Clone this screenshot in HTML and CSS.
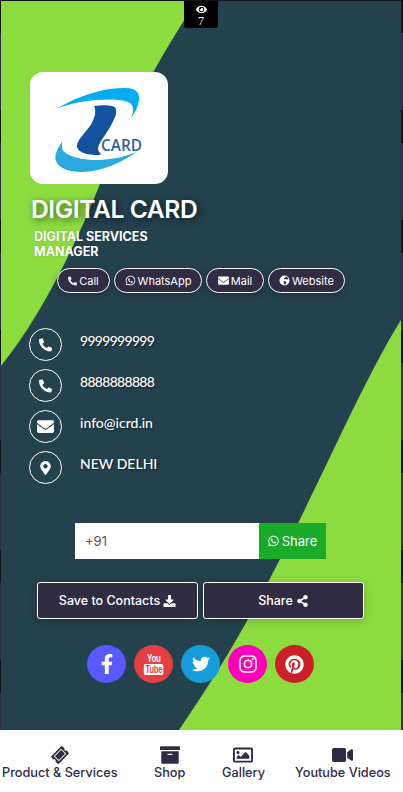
FILE: index.html
```html
<!DOCTYPE html>
<html lang="en">
<head>
<meta charset="utf-8">
<title>Digital Card</title>
<link rel="stylesheet" href="styles.css">
</head>
<body>
<main class="card">
  <svg class="backdrop" viewBox="0 0 400 729" preserveAspectRatio="none" aria-hidden="true">
    <path class="leaf" d="M0 0H196C170 38 130 105 99 183C72 250 40 315 0 365Z"/>
    <path class="leaf" d="M400 319V729H178C215 675 245 625 278 560C322 475 362 380 400 319Z"/>
  </svg>
  <div class="views">
    <svg class="views-eye" viewBox="0 0 576 512"><path d="M572.52 241.4C518.29 135.59 410.93 64 288 64S57.68 135.64 3.48 241.41a32.35 32.35 0 0 0 0 29.19C57.71 376.41 165.07 448 288 448s230.32-71.64 284.52-177.41a32.35 32.35 0 0 0 0-29.19zM288 400a144 144 0 1 1 144-144 143.93 143.93 0 0 1-144 144zm0-240a95.31 95.31 0 0 0-25.31 3.79 47.85 47.85 0 0 1-66.9 66.9A95.78 95.78 0 1 0 288 160z"/></svg>
    <span>7</span>
  </div>
  <div class="content">
    <div class="logo">
      <svg viewBox="0 0 138 112">
        <path class="logo-top" d="M26 37C48 24 74 15 96 16C106 16 110 21 109 28C108 35 105 41 101 46C104 40 104 34 100 31C94 27 80 27 66 28C52 29 38 32 26 37Z"/>
        <path class="logo-mid" d="M64 34C70 33 78 33 82 34C87 35 87 40 85 45C82 53 77 60 73 66C69 72 66 77 70 81C72 82 70 83 67 83C57 83 46 80 47 73C48 67 55 61 60 54C64 48 67 40 64 34Z"/>
        <path class="logo-low" d="M32 70C27 77 24 84 26 89C29 97 40 100 52 100C72 100 92 90 107 80C92 86 78 88 66 88C50 88 33 83 32 76Z"/>
        <text class="logo-text" x="71" y="79" textLength="41" lengthAdjust="spacingAndGlyphs">CARD</text>
      </svg>
    </div>
    <h1 class="name">DIGITAL CARD</h1>
    <p class="role">DIGITAL SERVICES<br>MANAGER</p>
    <div class="pills">
      <a class="pill"><svg class="ic" viewBox="0 0 512 512"><path d="M497.39 361.8l-112-48a24 24 0 0 0-28 6.9l-49.6 60.6A370.66 370.66 0 0 1 130.6 204.11l60.6-49.6a23.94 23.94 0 0 0 6.9-28l-48-112A24.16 24.16 0 0 0 122.6.61l-104 24A24 24 0 0 0 0 48c0 256.5 207.9 464 464 464a24 24 0 0 0 23.4-18.6l24-104a24.29 24.29 0 0 0-14.01-27.6z"/></svg>Call</a>
      <a class="pill"><svg class="ic ic-tall" viewBox="0 0 448 512"><path d="M380.9 97.1C339 55.1 283.2 32 223.9 32c-122.4 0-222 99.6-222 222 0 39.1 10.2 77.3 29.6 111L0 480l117.7-30.9c32.4 17.7 68.9 27 106.1 27h.1c122.3 0 224.1-99.6 224.1-222 0-59.3-25.2-115-67.1-157zm-157 341.6c-33.2 0-65.7-8.9-94-25.7l-6.7-4-69.8 18.3L72 359.2l-4.4-7c-18.5-29.4-28.2-63.3-28.2-98.2 0-101.7 82.8-184.5 184.6-184.5 49.3 0 95.6 19.2 130.4 54.1 34.8 34.9 56.2 81.2 56.1 130.5 0 101.8-84.9 184.6-186.6 184.6zm101.2-138.2c-5.5-2.8-32.8-16.2-37.9-18-5.1-1.9-8.8-2.8-12.5 2.8-3.7 5.6-14.3 18-17.6 21.8-3.2 3.7-6.5 4.2-12 1.4-32.6-16.3-54-29.1-75.5-66-5.7-9.8 5.7-9.1 16.3-30.3 1.8-3.7.9-6.9-.5-9.7-1.4-2.8-12.5-30.1-17.1-41.2-4.5-10.8-9.1-9.3-12.5-9.5-3.2-.2-6.9-.2-10.6-.2-3.7 0-9.7 1.4-14.8 6.9-5.1 5.6-19.4 19-19.4 46.3 0 27.3 19.9 53.7 22.6 57.4 2.8 3.7 39.1 59.7 94.8 83.8 35.2 15.2 49 16.5 66.6 13.9 10.7-1.6 32.8-13.4 37.4-26.4 4.6-13 4.6-24.1 3.2-26.4-1.3-2.5-5-3.9-10.5-6.6z"/></svg>WhatsApp</a>
      <a class="pill"><svg class="ic ic-wide" viewBox="0 0 512 512"><path d="M502.3 190.8c3.9-3.1 9.7-.2 9.7 4.7V400c0 26.5-21.5 48-48 48H48c-26.5 0-48-21.5-48-48V195.6c0-5 5.7-7.8 9.7-4.7 22.4 17.4 52.1 39.5 154.1 113.6 21.1 15.4 56.7 47.8 92.2 47.6 35.7.3 72-32.8 92.3-47.6 102-74.1 131.6-96.3 154-113.7zM256 320c23.2.4 56.6-29.2 73.4-41.4 132.7-96.3 142.8-104.7 173.4-128.7 5.8-4.5 9.2-11.5 9.2-18.9v-19c0-26.5-21.5-48-48-48H48C21.5 64 0 85.5 0 112v19c0 7.4 3.4 14.3 9.2 18.9 30.6 23.9 40.7 32.4 173.4 128.7 16.8 12.2 50.2 41.8 73.4 41.4z"/></svg>Mail</a>
      <a class="pill"><svg class="ic ic-tall" viewBox="0 0 24 24"><path fill-rule="evenodd" d="M12 1a11 11 0 1 0 0 22 11 11 0 0 0 0-22ZM14 3.500c3 .3 5.600 2.700 6.300 5.500l-3.300 1-2-1.500-3 1.500-1-3 3-1.500ZM11 13l4 1 1 2-2 4.500-2 .3-1-4-2-1.500Z"/></svg>Website</a>
    </div>
    <ul class="contacts">
      <li class="contact"><span class="disc"><svg viewBox="0 0 512 512"><path d="M497.39 361.8l-112-48a24 24 0 0 0-28 6.9l-49.6 60.6A370.66 370.66 0 0 1 130.6 204.11l60.6-49.6a23.94 23.94 0 0 0 6.9-28l-48-112A24.16 24.16 0 0 0 122.6.61l-104 24A24 24 0 0 0 0 48c0 256.5 207.9 464 464 464a24 24 0 0 0 23.4-18.6l24-104a24.29 24.29 0 0 0-14.01-27.6z"/></svg></span><span class="value value-num">9999999999</span></li>
      <li class="contact"><span class="disc"><svg viewBox="0 0 512 512"><path d="M497.39 361.8l-112-48a24 24 0 0 0-28 6.9l-49.6 60.6A370.66 370.66 0 0 1 130.6 204.11l60.6-49.6a23.94 23.94 0 0 0 6.9-28l-48-112A24.16 24.16 0 0 0 122.6.61l-104 24A24 24 0 0 0 0 48c0 256.5 207.9 464 464 464a24 24 0 0 0 23.4-18.6l24-104a24.29 24.29 0 0 0-14.01-27.6z"/></svg></span><span class="value value-num">8888888888</span></li>
      <li class="contact"><span class="disc"><svg class="disc-wide" viewBox="0 0 512 512"><path d="M502.3 190.8c3.9-3.1 9.7-.2 9.7 4.7V400c0 26.5-21.5 48-48 48H48c-26.5 0-48-21.5-48-48V195.6c0-5 5.7-7.8 9.7-4.7 22.4 17.4 52.1 39.5 154.1 113.6 21.1 15.4 56.7 47.8 92.2 47.6 35.7.3 72-32.8 92.3-47.6 102-74.1 131.6-96.3 154-113.7zM256 320c23.2.4 56.6-29.2 73.4-41.4 132.7-96.3 142.8-104.7 173.4-128.7 5.8-4.5 9.2-11.5 9.2-18.9v-19c0-26.5-21.5-48-48-48H48C21.5 64 0 85.5 0 112v19c0 7.4 3.4 14.3 9.2 18.9 30.6 23.9 40.7 32.4 173.4 128.7 16.8 12.2 50.2 41.8 73.4 41.4z"/></svg></span><span class="value">info@icrd.in</span></li>
      <li class="contact"><span class="disc"><svg viewBox="0 0 384 512"><path d="M172.268 501.67C26.97 291.031 0 268.413 0 192 0 85.961 85.961 0 192 0s192 85.961 192 192c0 76.413-26.97 99.031-172.268 309.67-9.535 13.774-29.93 13.773-39.464 0zM192 272c44.183 0 80-35.817 80-80s-35.817-80-80-80-80 35.817-80 80 35.817 80 80 80z"/></svg></span><span class="value">NEW DELHI</span></li>
    </ul>
    <form class="wa">
      <div class="wa-input">+91</div>
      <a class="wa-btn"><svg class="ic-wa" viewBox="0 0 448 512"><path d="M380.9 97.1C339 55.1 283.2 32 223.9 32c-122.4 0-222 99.6-222 222 0 39.1 10.2 77.3 29.6 111L0 480l117.7-30.9c32.4 17.7 68.9 27 106.1 27h.1c122.3 0 224.1-99.6 224.1-222 0-59.3-25.2-115-67.1-157zm-157 341.6c-33.2 0-65.7-8.9-94-25.7l-6.7-4-69.8 18.3L72 359.2l-4.4-7c-18.5-29.4-28.2-63.3-28.2-98.2 0-101.7 82.8-184.5 184.6-184.5 49.3 0 95.6 19.2 130.4 54.1 34.8 34.9 56.2 81.2 56.1 130.5 0 101.8-84.9 184.6-186.6 184.6zm101.2-138.2c-5.5-2.8-32.8-16.2-37.9-18-5.1-1.9-8.8-2.8-12.5 2.8-3.7 5.6-14.3 18-17.6 21.8-3.2 3.7-6.5 4.2-12 1.4-32.6-16.3-54-29.1-75.5-66-5.7-9.8 5.7-9.1 16.3-30.3 1.8-3.7.9-6.9-.5-9.7-1.4-2.8-12.5-30.1-17.1-41.2-4.5-10.8-9.1-9.3-12.5-9.5-3.2-.2-6.9-.2-10.6-.2-3.7 0-9.7 1.4-14.8 6.9-5.1 5.6-19.4 19-19.4 46.3 0 27.3 19.9 53.7 22.6 57.4 2.8 3.7 39.1 59.7 94.8 83.8 35.2 15.2 49 16.5 66.6 13.9 10.7-1.6 32.8-13.4 37.4-26.4 4.6-13 4.6-24.1 3.2-26.4-1.3-2.5-5-3.9-10.5-6.6z"/></svg>Share</a>
    </form>
    <div class="actions">
      <a class="action">Save to Contacts<svg class="ic-act" viewBox="0 0 512 512"><path d="M216 0h80c13.3 0 24 10.7 24 24v168h87.7c17.8 0 26.7 21.5 14.1 34.1L269.7 378.3c-7.5 7.5-19.8 7.5-27.3 0L90.1 226.1c-12.6-12.6-3.7-34.1 14.1-34.1H192V24c0-13.3 10.7-24 24-24zm296 376v112c0 13.3-10.7 24-24 24H24c-13.3 0-24-10.7-24-24V376c0-13.3 10.7-24 24-24h146.7l49 49c20.1 20.1 52.5 20.1 72.6 0l49-49H488c13.3 0 24 10.7 24 24zm-124 88c0-11-9-20-20-20s-20 9-20 20 9 20 20 20 20-9 20-20zm64 0c0-11-9-20-20-20s-20 9-20 20 9 20 20 20 20-9 20-20z"/></svg></a>
      <a class="action">Share<svg class="ic-act" viewBox="0 0 448 512"><path d="M352 320c-22.608 0-43.387 7.819-59.79 20.895l-102.486-64.054a96.551 96.551 0 0 0 0-41.683l102.486-64.054C308.613 184.181 329.392 192 352 192c53.019 0 96-42.981 96-96S405.019 0 352 0s-96 42.981-96 96c0 7.158.79 14.13 2.276 20.841L155.79 180.895C139.387 167.819 118.608 160 96 160c-53.019 0-96 42.981-96 96s42.981 96 96 96c22.608 0 43.387-7.819 59.79-20.895l102.486 64.054A96.301 96.301 0 0 0 256 416c0 53.019 42.981 96 96 96s96-42.981 96-96-42.981-96-96-96z"/></svg></a>
    </div>
    <div class="socials">
      <a class="social fb"><svg viewBox="0 0 320 512"><path d="M279.14 288l14.22-92.66h-88.91v-60.13c0-25.35 12.42-50.06 52.24-50.06h40.42V6.26S260.43 0 225.36 0c-73.22 0-121.08 44.38-121.08 124.72v70.62H22.89V288h81.39v224h100.17V288z"/></svg></a>
      <a class="social yt"><span class="yt-mark"><span class="yt-you">You</span><span class="yt-tube">Tube</span></span></a>
      <a class="social tw"><svg viewBox="0 0 512 512"><path d="M459.37 151.716c.325 4.548.325 9.097.325 13.645 0 138.72-105.583 298.558-298.558 298.558-59.452 0-114.68-17.219-161.137-47.106 8.447.974 16.568 1.299 25.34 1.299 49.055 0 94.213-16.568 130.274-44.832-46.132-.975-84.792-31.188-98.112-72.772 6.498.974 12.995 1.624 19.818 1.624 9.421 0 18.843-1.3 27.614-3.573-48.081-9.747-84.143-51.98-84.143-102.985v-1.299c13.969 7.797 30.214 12.67 47.431 13.319-28.264-18.843-46.781-51.005-46.781-87.391 0-19.492 5.197-37.36 14.294-52.954 51.655 63.675 129.3 105.258 216.365 109.807-1.624-7.797-2.599-15.918-2.599-24.04 0-57.828 46.782-104.934 104.934-104.934 30.213 0 57.502 12.67 76.67 33.137 23.715-4.548 46.456-13.32 66.599-25.34-7.798 24.366-24.366 44.833-46.132 57.827 21.117-2.273 41.584-8.122 60.426-16.243-14.292 20.791-32.161 39.308-52.628 54.253z"/></svg></a>
      <a class="social ig"><svg viewBox="0 0 448 512"><path d="M224.1 141c-63.6 0-114.9 51.3-114.9 114.9s51.3 114.9 114.9 114.9S339 319.5 339 255.9 287.7 141 224.1 141zm0 189.6c-41.1 0-74.7-33.5-74.7-74.7s33.5-74.7 74.7-74.7 74.7 33.5 74.7 74.7-33.6 74.7-74.7 74.7zm146.4-194.3c0 14.9-12 26.8-26.8 26.8-14.9 0-26.8-12-26.8-26.8s12-26.8 26.8-26.8 26.8 12 26.8 26.8zm76.1 27.2c-1.7-35.9-9.9-67.7-36.2-93.9-26.2-26.2-58-34.4-93.9-36.2-37-2.1-147.9-2.1-184.9 0-35.8 1.7-67.6 9.9-93.9 36.1s-34.4 58-36.2 93.9c-2.1 37-2.1 147.9 0 184.9 1.7 35.9 9.9 67.7 36.2 93.9s58 34.4 93.9 36.2c37 2.1 147.9 2.1 184.9 0 35.9-1.7 67.7-9.9 93.9-36.2 26.2-26.2 34.4-58 36.2-93.9 2.1-37 2.1-147.8 0-184.8zM398.8 388c-7.8 19.6-22.9 34.7-42.6 42.6-29.5 11.7-99.5 9-132.1 9s-102.7 2.6-132.1-9c-19.6-7.8-34.7-22.9-42.6-42.6-11.7-29.5-9-99.5-9-132.1s-2.6-102.7 9-132.1c7.8-19.6 22.9-34.7 42.6-42.6 29.5-11.7 99.5-9 132.1-9s102.7-2.6 132.1 9c19.6 7.8 34.7 22.9 42.6 42.6 11.7 29.5 9 99.5 9 132.1s2.7 102.7-9 132.1z"/></svg></a>
      <a class="social pt"><svg viewBox="0 0 496 512"><path d="M496 256c0 137-111 248-248 248-25.6 0-50.2-3.9-73.4-11.1 10.1-16.5 25.2-43.5 30.8-65 3-11.6 15.4-59 15.4-59 8.1 15.4 31.7 28.5 56.8 28.5 74.8 0 128.7-68.8 128.7-154.3 0-81.9-66.9-143.2-152.9-143.2-107 0-163.9 71.8-163.9 150.1 0 36.4 19.4 81.7 50.3 96.1 4.7 2.2 7.2 1.2 8.3-3.3.8-3.4 5-20.3 6.9-28.1.6-2.5.3-4.7-1.7-7.1-10.1-12.5-18.3-35.3-18.3-56.6 0-54.7 41.4-107.6 112-107.6 60.9 0 103.6 41.5 103.6 100.9 0 67.1-33.9 113.6-78 113.6-24.3 0-42.6-20.1-36.7-44.8 7-29.5 20.5-61.3 20.5-82.6 0-19-10.2-34.9-31.4-34.9-24.9 0-44.9 25.7-44.9 60.2 0 22 7.4 36.8 7.4 36.8s-24.5 103.8-29 123.2c-5 21.4-3 51.6-.9 71.2C65.4 450.9 0 361.1 0 256 0 119 111 8 248 8s248 111 248 248z"/></svg></a>
    </div>
  </div>
</main>
<nav class="nav">
  <a class="nav-item"><svg class="nav-ic nav-ticket" viewBox="0 0 576 512"><path d="M128 160h320v192H128V160zm400 96c0 26.51 21.49 48 48 48v96c0 26.51-21.49 48-48 48H48c-26.51 0-48-21.49-48-48v-96c26.51 0 48-21.49 48-48s-21.49-48-48-48v-96c0-26.51 21.49-48 48-48h480c26.51 0 48 21.49 48 48v96c-26.51 0-48 21.49-48 48zm-48-104c0-13.255-10.745-24-24-24H120c-13.255 0-24 10.745-24 24v208c0 13.255 10.745 24 24 24h336c13.255 0 24-10.745 24-24V152z"/></svg>Product &amp; Services</a>
  <a class="nav-item"><svg class="nav-ic" viewBox="0 0 512 512"><path d="M32 448c0 17.7 14.3 32 32 32h384c17.7 0 32-14.3 32-32V160H32v288zm160-212c0-6.6 5.4-12 12-12h104c6.6 0 12 5.4 12 12v8c0 6.6-5.4 12-12 12H204c-6.6 0-12-5.4-12-12v-8zM480 32H32C14.3 32 0 46.3 0 64v48c0 8.8 7.2 16 16 16h480c8.8 0 16-7.2 16-16V64c0-17.7-14.3-32-32-32z"/></svg>Shop</a>
  <a class="nav-item"><svg class="nav-ic nav-gallery" viewBox="0 0 512 512"><path d="M464 64H48C21.49 64 0 85.49 0 112v288c0 26.51 21.49 48 48 48h416c26.51 0 48-21.49 48-48V112c0-26.51-21.49-48-48-48zm-6 336H54a6 6 0 0 1-6-6V118a6 6 0 0 1 6-6h404a6 6 0 0 1 6 6v276a6 6 0 0 1-6 6zM128 152c-22.091 0-40 17.909-40 40s17.909 40 40 40 40-17.909 40-40-17.909-40-40-40zM96 352h320v-80l-87.515-87.515c-4.686-4.686-12.284-4.686-16.971 0L192 304l-39.515-39.515c-4.686-4.686-12.284-4.686-16.971 0L96 304v48z"/></svg>Gallery</a>
  <a class="nav-item"><svg class="nav-ic nav-video" viewBox="0 0 576 512"><path d="M336.2 64H47.800C21.400 64 0 85.400 0 111.800v288.400C0 426.600 21.400 448 47.800 448h288.400c26.400 0 47.800-21.400 47.800-47.800V111.800c0-26.400-21.400-47.800-47.800-47.800zm189.400 37.700L416 177.300v157.400l109.600 75.500c21.200 14.600 50.400-.3 50.400-25.800V127.500c0-25.400-29.100-40.400-50.400-25.800z"/></svg>Youtube Videos</a>
</nav>
</body>
</html>
```
FILE: styles.css
```css
* { box-sizing: border-box; }
html, body { margin: 0; height: 100%; }
body {
  display: flex;
  flex-direction: column;
  height: 792px;
  overflow: hidden;
  background: repeating-linear-gradient(180deg, #14131d 0 33px, #2f2c43 33px 110px);
  font-family: Inter, "Open Sans", sans-serif;
  color: #fff;
}
.card {
  position: relative;
  flex: none;
  height: 729px;
  margin: 1px 2px 0 1px;
  background: #24414e;
}
.backdrop { position: absolute; inset: 0; width: 100%; height: 100%; }
.leaf { fill: #8cdb3f; }
.views {
  position: absolute;
  left: 183px;
  top: 0;
  width: 34px;
  height: 27px;
  background: #000;
  border-radius: 0 0 3px 3px;
  display: flex;
  flex-direction: column;
  align-items: center;
  font-family: "Liberation Serif", serif;
  font-size: 12px;
  line-height: 13px;
}
.views-eye { width: 11px; height: 11px; margin-top: 3px; fill: #fff; }
.content { position: relative; padding: 71px 0 0 29px; }
.logo {
  width: 138px;
  height: 112px;
  background: #fff;
  border-radius: 13px;
}
.logo svg { display: block; width: 100%; height: 100%; }
.logo-top { fill: #00aeef; }
.logo-mid { fill: #13529f; }
.logo-low { fill: #29abe2; }
.logo-text { fill: #2a62a8; font-family: "Open Sans", sans-serif; font-size: 16px; font-weight: 600; }
.name {
  margin: 11px 0 0 1px;
  font-size: 24.600px;
  line-height: 28px;
  font-weight: 600;
  letter-spacing: -0.4px;
  text-shadow: 2px 2px 7px rgba(0,0,0,.6);
}
.role {
  margin: 6px 0 0 4px;
  font-size: 12.500px;
  line-height: 15px;
  font-weight: 700;
  text-shadow: 0 0 2px rgba(0,0,0,.2);
}
.pills {
  display: grid;
  grid-template-columns: 53px 88px 58px 77px;
  gap: 4px;
  width: max-content;
  margin: 9px 0 0 27px;
}
.pill {
  display: flex;
  align-items: center;
  justify-content: center;
  gap: 2px;
  height: 25px;
  background: #2f2c43;
  border: 1px solid #fff;
  border-radius: 13px;
  font-size: 11px;
  box-shadow: 0 2px 6px rgba(0,0,0,.25);
}
.ic { width: 9px; height: 10px; fill: #fff; flex: none; }
.ic-tall { width: 11px; height: 11px; }
.ic-wide { width: 11px; height: 11px; }
.contacts { list-style: none; margin: 35px 0 0 -1px; padding: 0; display: flex; flex-direction: column; gap: 8px; }
.contact { display: flex; gap: 18px; height: 33px; }
.disc {
  width: 33px;
  height: 33px;
  border: 1px solid #fff;
  border-radius: 50%;
  display: flex;
  align-items: center;
  justify-content: center;
  flex: none;
}
.disc svg { width: 13px; height: 14px; fill: #fff; }
.disc .disc-wide { width: 17px; height: 17px; }
.value {
  font-family: Lato, sans-serif;
  font-size: 14px;
  line-height: 26px;
  font-weight: 500;
  text-shadow: 1px 1px 2px rgba(0,0,0,.5);
}
.value-num { letter-spacing: -0.7px; }
.wa { display: flex; margin: 39px 0 0 45px; height: 36px; }
.wa-input {
  width: 184px;
  background: #fff;
  color: #555;
  font-size: 13px;
  line-height: 36px;
  padding-left: 10px;
}
.wa-btn {
  display: flex;
  align-items: center;
  justify-content: center;
  gap: 3px;
  width: 67px;
  background: #1aab2b;
  font-size: 13px;
}
.ic-wa { width: 11px; height: 12px; fill: #fff; }
.actions { display: flex; gap: 5px; margin: 23px 0 0 7px; }
.action {
  display: flex;
  align-items: center;
  justify-content: center;
  gap: 3px;
  width: 161px;
  height: 37px;
  background: #2f2c43;
  border: 1px solid #fff;
  border-radius: 3px;
  font-size: 12.500px;
  font-weight: 500;
  box-shadow: 0 2px 10px rgba(0,0,0,.2);
}
.ic-act { width: 13px; height: 12px; fill: #fff; }
.socials { display: flex; gap: 8px; margin: 26px 0 0 57px; }
.social {
  width: 39px;
  height: 38px;
  border-radius: 50%;
  display: flex;
  align-items: center;
  justify-content: center;
}
.social svg { width: 20px; height: 20px; fill: #fff; }
.fb { background: #5a58ff; }
.yt { background: #e63f43; }
.tw { background: #169cd8; }
.ig { background: #ff00b8; }
.pt { background: #cb2028; }
.tw svg { width: 18px; height: 18px; }
.pt svg { width: 19px; height: 19px; }
.yt-mark {
  display: flex;
  flex-direction: column;
  align-items: center;
  font-family: "Liberation Sans", sans-serif;
  font-weight: 700;
  font-size: 11px;
  line-height: 10px;
  letter-spacing: -0.5px;
  transform: scaleX(.72);
}
.yt-tube { background: #fff; color: #e63f43; border-radius: 2px; padding: 0 2px; margin-top: 1px; line-height: 11px; }
.nav {
  flex: none;
  height: 62px;
  background: #fff;
  display: grid;
  grid-template-columns: 152px 68px 73px auto;
  justify-items: start;
  align-content: start;
  padding: 15px 0 0 2px;
}
.nav-item {
  display: flex;
  flex-direction: column;
  align-items: center;
  color: #2f2c43;
  font-size: 12.700px;
  font-weight: 500;
  line-height: 15px;
}
.nav-ic { width: 20px; height: 20px; fill: #2f2c43; }
.nav-ticket { width: 16px; transform: rotate(-45deg); }
.nav-gallery { width: 22px; }
.nav-video { width: 21px; }
```
